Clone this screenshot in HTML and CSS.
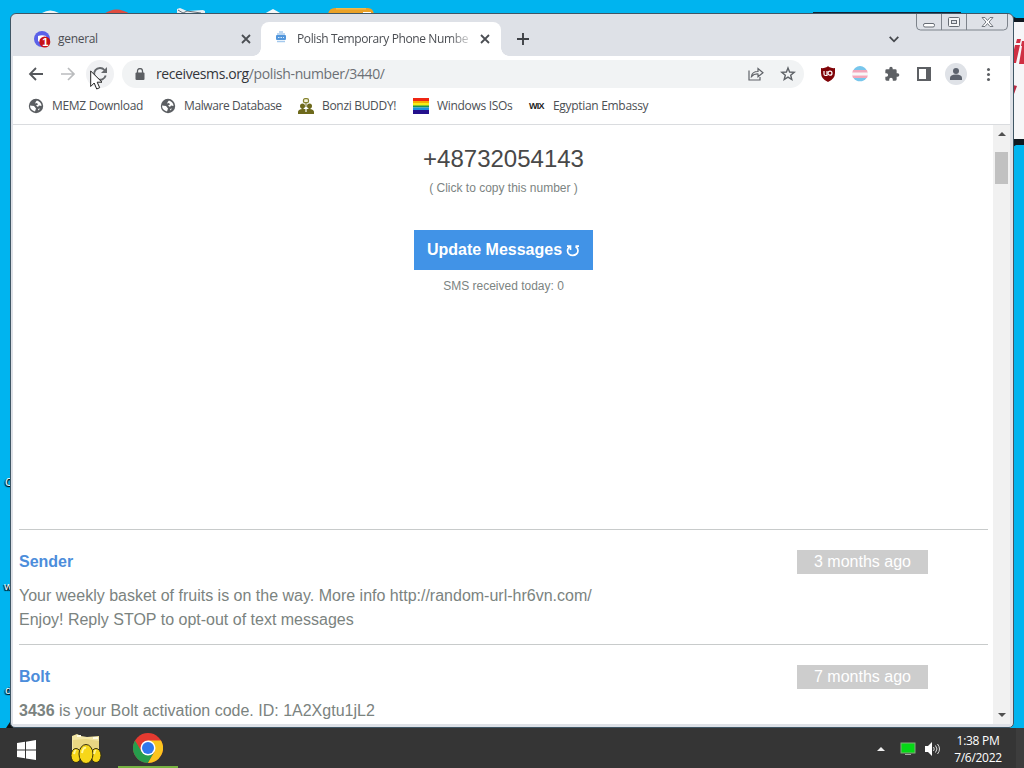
FILE: index.html
```
<!DOCTYPE html>
<html lang="en">
<head>
<meta charset="utf-8">
<title>Polish Temporary Phone Number</title>
<link rel="stylesheet" href="styles.css">
</head>
<body>
<div class="desktop">
  <svg class="wallpaper" width="1024" height="728" viewBox="0 0 1024 728">
    <path d="M42 13q8-5 17 0z" fill="#f3f3f3"/>
    <path d="M104 14q12-9 26 0z" fill="#df4c40"/>
    <path d="M177 14V9l3-1 7 3 16-1 2 1v3z" fill="#e9eef2"/><path d="M178 10l5 3 4-2 14 2" fill="none" stroke="#45505a" stroke-width=".8"/>
    <path d="M264 14l9-5 9 5z" fill="#f7f7f7"/>
    <path d="M328 14q1-6 7-6h33q5 0 6 6z" fill="#eaa126"/><path d="M336 8h30v1.500h-30z" fill="#f2b94a"/><path d="M363 12h8v2h-8z" fill="#fff"/>
    <path d="M813 12.500h148" stroke="#123" stroke-width="1"/>
    <path d="M1008 14l8 4h8v127h-8l-8 5z" fill="#101820"/>
    <path d="M1013 22h11v117h-11z" fill="#f6f6f8"/>
    <path d="M1015 45h5l-4 18h-5zM1017 39h4l-1 4h-4zM1021 46l1-5h2v23h-5l3-18z" fill="#cf3043"/>
    <path d="M1013 85l4 1-3 8h-1z" fill="#b92b43"/>
    <path d="M10 722l-4 6h14z" fill="#111"/>
  </svg>
  <span class="label label-a">C</span><span class="label label-b">w</span><span class="label label-c">d</span>

  <main class="window">
    <header class="tabs">
      <div class="tab idle">
        <svg width="18" height="18" viewBox="0 0 18 18"><circle cx="8" cy="8" r="8" fill="#5b61e8"/><path d="M4 5q4-1.700 8 0l1 5q-2 2-3 0H7q-1 2-3 0z" fill="#fff"/><circle cx="10.800" cy="11" r="5.500" fill="#c81218"/><text x="8.200" y="15" class="badge-text">1</text></svg>
        <span class="tab-title t-general">general</span>
        <svg class="close" width="10" height="10" viewBox="0 0 10 10"><path d="M1 1l8 8M9 1L1 9"/></svg>
      </div>
      <div class="tab active">
        <svg class="sms" width="10" height="12" viewBox="0 0 10 12"><path d="M3 1h4M1 3h8" stroke="#a5c9ed" stroke-width="1.500"/><rect y="4" width="10" height="5" rx="1" fill="#5397dc"/><path d="M2 6.500h6" stroke="#d5e8fa" stroke-dasharray="1.500 1"/><path d="M1 10.500h8" stroke="#a5c9ed" stroke-width="1.500"/></svg>
        <span class="tab-title t-polish">Polish Temporary Phone Numbe</span>
        <svg class="close" width="10" height="10" viewBox="0 0 10 10"><path d="M1 1l8 8M9 1L1 9"/></svg>
      </div>
      <svg class="plus" width="12" height="12" viewBox="0 0 12 12"><path d="M6 0v12M0 6h12" stroke="#3e4146" stroke-width="1.900"/></svg>
      <svg class="chevron" width="10" height="7" viewBox="0 0 10 7"><path d="M.7.8L5 5.300 9.300.8" fill="none" stroke="#45484d" stroke-width="1.800"/></svg>
      <svg class="controls" width="94" height="19" viewBox="0 0 94 19"><path d="M1.500 0v12q0 4 4 4h83q4 0 4-4V0M26.500 0v16M51.500 0v16" fill="none" stroke="#7d838b"/><rect x="8.500" y="9.500" width="11" height="3.500" rx="1.500" fill="#fff" stroke="#666c74"/><rect x="33.500" y="3.500" width="11" height="9" rx="1" fill="#f4f5f6" stroke="#666c74"/><rect x="36.500" y="6.500" width="5" height="3" fill="#dfe2e8" stroke="#666c74"/><path d="M67 3.500h3l2.500 3 2.500-3h3l-4 4.500 4 4.500h-3l-2.500-3-2.500 3h-3l4-4.500z" fill="#fff" stroke="#666c74" stroke-width=".9"/></svg>
    </header>

    <nav class="toolbar">
      <svg class="back" width="16" height="16" viewBox="0 0 16 16"><path d="M15 8H2M8 2L2 8l6 6" fill="none" stroke="#55585c" stroke-width="1.800"/></svg>
      <svg class="forward" width="16" height="16" viewBox="0 0 16 16"><path d="M1 8h13M8 2l6 6-6 6" fill="none" stroke="#babcbe" stroke-width="1.700"/></svg>
      <div class="reload"><svg width="16" height="16" viewBox="0 0 16 16"><path d="M13.700 9.500A5.900 5.900 0 1 1 12.500 4" fill="none" stroke="#66696d" stroke-width="1.900"/><path d="M15 1v6H9z" fill="#66696d"/></svg></div>
      <div class="address">
        <svg width="10" height="13" viewBox="0 0 10 13"><rect x=".5" y="4.500" width="9" height="7.500" rx="1" fill="#5c5f63"/><path d="M2.500 5V3a2.500 2.500 0 0 1 5 0v2" fill="none" stroke="#5c5f63" stroke-width="1.300"/></svg>
        <span class="url">receivesms.org<span>/polish-number/3440/</span></span>
        <svg class="share" width="16" height="14" viewBox="0 0 16 14"><path d="M1 3.500V13h11v-3M3.500 9.500q.5-5 6.500-5V1.500l5 4.300-5 4V7q-4-.3-6.500 2.500z" fill="none" stroke="#606368" stroke-width="1.200"/></svg>
        <svg class="star" width="16" height="16" viewBox="0 0 16 16"><path d="M8 2l1.600 4 4.600.3-3.500 2.900 1.100 4.400L8 11.200l-3.800 2.400 1.100-4.400-3.500-2.900L6.400 6z" fill="none" stroke="#5f6368" stroke-width="1.400"/></svg>
      </div>
      <div class="extensions">
        <svg width="16" height="16" viewBox="0 0 16 16"><path d="M8 0l1 1q3 1.500 6 1v5q0 6-7 9-7-3-7-9V2q3 .5 6-1z" fill="#800408"/><path d="M4 5v3q0 1.500 1.500 1.500H7V5" fill="none" stroke="#fff" stroke-width="1.200"/><circle cx="10" cy="7.200" r="2" fill="none" stroke="#fff" stroke-width="1.200"/></svg>
        <svg width="16" height="16" viewBox="0 0 16 16"><path d="M3 2a8 8 0 0 1 10 0l1.500 2h-13z" fill="#78c6ec"/><path d="M1 4h14l.8 3H.2z" fill="#f3a7bb"/><path d="M0 6.500h16v3H0z" fill="#f9f6f7"/><path d="M.2 9.500h15.600L15 12H1z" fill="#f3a7bb"/><path d="M1.500 12h13a8 8 0 0 1-13 0z" fill="#78c6ec"/></svg>
        <svg width="16" height="16" viewBox="0 0 24 24"><path d="M20.500 11H19V7a2 2 0 0 0-2-2h-4V3.500a2.500 2.500 0 0 0-5 0V5H4a2 2 0 0 0-2 2v3.800h1.500a2.700 2.700 0 0 1 0 5.400H2V20a2 2 0 0 0 2 2h3.800v-1.500a2.700 2.700 0 0 1 5.400 0V22H17a2 2 0 0 0 2-2v-4h1.500a2.500 2.500 0 0 0 0-5z" fill="#5d6064"/></svg>
        <svg width="16" height="16" viewBox="0 0 16 16"><path d="M1 1h14v14H1zM3 3v10h7V3z" fill="#5d6064" fill-rule="evenodd"/></svg>
        <svg class="avatar" width="22" height="22" viewBox="0 0 22 22"><circle cx="11" cy="11" r="11" fill="#dfe2e7"/><circle cx="11" cy="8" r="3" fill="#5d636e"/><path d="M5 17v-2q0-3.500 6-3.500t6 3.500v2z" fill="#5d636e"/></svg>
        <svg width="16" height="16" viewBox="0 0 16 16" fill="#5c5f63"><circle cx="8.500" cy="3.500" r="1.500"/><circle cx="8.500" cy="8.500" r="1.500"/><circle cx="8.500" cy="13.500" r="1.500"/></svg>
      </div>
    </nav>

    <nav class="bookmarks">
      <div class="bookmark b-memz"><svg width="16" height="16" viewBox="0 0 16 16"><circle cx="8" cy="8" r="7.200" fill="#5b5e62"/><path d="M9 2.500q4.500 1.500 4.500 5.500l-2.500-.5-1 1.500-2-1.500 2-1-1-1.500-2 .500 1-2zM2 7.500l4 .5 2 2.500-1 3q-5-1.500-5-6zM10 11l2-.5-1.500 2z" fill="#fff"/></svg><span>MEMZ Download</span></div>
      <div class="bookmark b-malware"><svg width="16" height="16" viewBox="0 0 16 16"><circle cx="8" cy="8" r="7.200" fill="#5b5e62"/><path d="M9 2.500q4.500 1.500 4.500 5.500l-2.500-.5-1 1.500-2-1.500 2-1-1-1.500-2 .500 1-2zM2 7.500l4 .5 2 2.500-1 3q-5-1.500-5-6zM10 11l2-.5-1.500 2z" fill="#fff"/></svg><span>Malware Database</span></div>
      <div class="bookmark b-bonzi"><svg width="16" height="16" viewBox="0 0 16 16"><g fill="#6d691b"><circle cx="4.500" cy="8" r="2.500"/><circle cx="11.500" cy="8" r="2.500"/><path d="M3.500 9h2v3h-2zM10.500 9h2v3h-2zM0 16v-2q0-2 3.500-3h9q3.500 1 3.500 3v2zM7.500 5h1v4h-1z"/></g><path d="M8 11v3" stroke="#fff" stroke-width="1.200"/><rect x="5.500" y=".7" width="5" height="4" rx="1.500" fill="#f5f4db" stroke="#85822f" stroke-width="1.300"/></svg><span>Bonzi BUDDY!</span></div>
      <div class="bookmark b-windows"><svg width="16" height="16" viewBox="0 0 16 16"><path d="M0 0h16v3H0z" fill="#ef2513"/><path d="M0 3h16v3H0z" fill="#f6ae00"/><path d="M0 5h16v3H0z" fill="#f7ef18"/><path d="M0 7.500h16v2H0z" fill="#199451"/><path d="M0 9.500h16v3H0z" fill="#1792e0"/><path d="M0 12h16v4H0z" fill="#24118c"/></svg><span>Windows ISOs</span></div>
      <div class="bookmark b-embassy"><b>WIX</b><span>Egyptian Embassy</span></div>
    </nav>

    <div class="viewport">
      <section class="page">
        <div class="phone">
          <h1>+48732054143</h1>
          <p class="copy">( Click to copy this number )</p>
          <button type="button">Update Messages <svg width="14" height="12" viewBox="0 0 14 12"><path d="M1 1.200h3.500V5M4.200 1.500Q1.500 3 1.500 5.800A5.200 4.500 0 0 0 12 5.800Q12 3 9.500 1.500M13 1.200H9.500" fill="none" stroke="#fff" stroke-width="1.700"/></svg></button>
          <p class="today">SMS received today: 0</p>
        </div>
        <article class="message">
          <div class="heading"><strong>Sender</strong><time>3 months ago</time></div>
          <p>Your weekly basket of fruits is on the way. More info http://random-url-hr6vn.com/<br>Enjoy! Reply STOP to opt-out of text messages</p>
        </article>
        <article class="message">
          <div class="heading"><strong>Bolt</strong><time>7 months ago</time></div>
          <p><b>3436</b> is your Bolt activation code. ID: 1A2Xgtu1jL2</p>
        </article>
      </section>
      <aside class="scrollbar"><svg width="8" height="4" viewBox="0 0 8 4"><path d="M0 4l4-4 4 4z" fill="#505050"/></svg><div class="thumb"></div><svg class="down" width="8" height="4" viewBox="0 0 8 4"><path d="M0 0l4 4 4-4z" fill="#505050"/></svg></aside>
    </div>
  </main>
  <svg class="cursor" width="13" height="20" viewBox="0 0 13 20"><path d="M.7 1v15.500l3.500-3.500 2.500 6 3-1.300-2.500-5.500H12z" fill="#fff" stroke="#222"/></svg>
</div>

<footer class="taskbar">
  <svg class="start" width="19" height="20" viewBox="0 0 19 20"><path d="M0 3l8-1.200v7.700H0zM9 1.700L19 0v9.500H9zM0 10.500h8v7.700L0 17zM9 10.500h10V20L9 18.400z" fill="#fff"/></svg>
  <svg class="folder" width="32" height="32" viewBox="0 0 32 32"><path d="M2 3l5-2 4 2 6 1 12-1v22H2z" fill="#f3e6a4"/><path d="M3 7l13-1 13 2v14H3z" fill="#e9d783"/><path d="M7 3h4M23 5h5" stroke="#fffbe1" stroke-width="2"/><g stroke="#332e0d" fill="#f7d719"><ellipse cx="6" cy="22.500" rx="5" ry="7"/><ellipse cx="26" cy="22.500" rx="5" ry="7"/><ellipse cx="16" cy="21" rx="7" ry="9.500"/></g><path d="M12 20q1-6 4-5M4 21q1-4 2-3M24 21q1-4 2-3" fill="none" stroke="#fff89b" stroke-width="2"/></svg>
  <div class="chrome"><svg width="30" height="30" viewBox="0 0 30 30"><circle cx="15" cy="15" r="15" fill="#e43a30"/><path d="M2 7.500A15 15 0 0 0 15 30l6.500-11.500h-13z" fill="#269d4c"/><path d="M15 30A15 15 0 0 0 28 7.500H15l6.500 11.200z" fill="#fbc51e"/><circle cx="15" cy="15" r="7.500" fill="#fff"/><circle cx="15" cy="15" r="6" fill="#3077ed"/></svg></div>
  <div class="tray">
    <svg width="8" height="4" viewBox="0 0 8 4"><path d="M0 4l4-4 4 4z" fill="#eee"/></svg>
    <svg class="monitor" width="16" height="14" viewBox="0 0 16 14"><rect x="1" y="1" width="14" height="10" fill="#05d816" stroke="#83ad7c"/><path d="M5 12.500h6" stroke="#a2aaa1"/></svg>
    <svg class="speaker" width="16" height="14" viewBox="0 0 16 14"><path d="M0 4h3l4-4v14l-4-4H0z" fill="#fff"/><path d="M8.500 5q1.500 2 0 4M10.500 3.500q3 3.500 0 7M12.500 2q4 5 0 10" fill="none" stroke="#ddd"/></svg>
    <div class="clock"><span>1:38 PM</span><span>7/6/2022</span></div>
  </div>
</footer>
</body>
</html>
```
FILE: styles.css
```
* { box-sizing: border-box; }
body { margin: 0; width: 1024px; height: 768px; overflow: hidden; font-family: "Liberation Sans", Arial, sans-serif; }
svg { display: block; flex: none; }
p, h1 { margin: 0; }
.desktop { position: relative; height: 728px; background: #00b4ef; overflow: hidden; }
.wallpaper { position: absolute; inset: 0; }
.label { position: absolute; left: 5px; color: #fff; font: 11px "Open Sans", sans-serif; text-shadow: 1px 1px 1px #000, -1px 1px 1px #000; }
.label-a { top: 474px; } .label-b { top: 578px; left: 4px; } .label-c { top: 682px; }
.window { position: absolute; left: 10px; top: 13px; width: 1004px; height: 715px; border: 1px solid #3f5665; border-radius: 6px 6px 5px 5px; padding: 0 3px 3px; background: #dee1e7; display: flex; flex-direction: column; overflow: hidden; }
.tabs { height: 42px; flex: none; display: flex; align-items: flex-start; margin-right: -3px; }
.tab { display: flex; align-items: center; height: 34px; margin-top: 8px; }
.idle { width: 247px; padding: 0 10px 0 20px; }
.idle > svg:first-child { margin-top: 2px; }
.active { position: relative; width: 240px; background: #fff; border-radius: 8px 8px 0 0; padding: 0 11px 0 15px; }
.active::before, .active::after { content: ""; position: absolute; bottom: 0; width: 8px; height: 8px; }
.active::before { left: -8px; background: radial-gradient(circle at 0 0, #dee1e7 7.5px, #fff 8px); }
.active::after { right: -8px; background: radial-gradient(circle at 100% 0, #dee1e7 7.5px, #fff 8px); }
.sms { margin-top: -4px; }
.tab-title, .bookmark, .url, .clock { font-family: "Open Sans", sans-serif; white-space: nowrap; }
.tab-title { font-size: 12px; line-height: 18px; color: #4b4e53; }
.t-general { margin-left: 6px; letter-spacing: -.3px; }
.t-polish { width: 173px; margin-left: 11px; letter-spacing: -.39px; mask-image: linear-gradient(to right, #000 88%, rgba(0, 0, 0, .2)); }
.close { margin-left: auto; fill: none; stroke: #4b4e53; stroke-width: 1.8; }
.badge-text { font: bold 11px "Liberation Sans", sans-serif; fill: #fff; }
.plus { margin: 19px 0 0 16px; }
.chevron { margin: 22px 0 0 auto; }
.controls { margin: 0 4px 0 16px; }
.toolbar { height: 36px; flex: none; display: flex; align-items: center; background: #fff; margin: 0 0 0 -1px; padding-left: 15px; }
.forward { margin-left: 16px; }
.reload { width: 28px; height: 28px; margin-left: 10px; border-radius: 50%; background: #f0f1f3; display: grid; place-items: center; }
.address { width: 682px; height: 28px; margin-left: 8px; border-radius: 14px; background: #f1f3f4; display: flex; align-items: center; padding: 0 8px 0 13px; }
.url { margin: -1px 0 0 11px; font-size: 14px; color: #33363b; letter-spacing: -.39px; }
.url span { color: #6c7075; }
.share { margin-left: auto; }
.star { margin-left: 16px; }
.extensions { display: flex; align-items: center; gap: 16px; margin-left: 16px; }
.avatar { margin: 0 -3px; }
.bookmarks { height: 33px; flex: none; display: flex; background: #fff; margin: 0 0 0 -1px; border-bottom: 1px solid #dadcdf; padding: 0 0 4px 15px; }
.bookmark { display: flex; align-items: center; gap: 8px; font-size: 12px; line-height: 18px; color: #4c4f54; letter-spacing: -.31px; }
.b-memz { width: 132px; } .b-malware { width: 138px; letter-spacing: -.4px; } .b-bonzi { width: 115px; } .b-windows { width: 116px; }
.bookmark b { width: 16px; font: bold 9px "Liberation Sans", sans-serif; color: #222; letter-spacing: -.7px; }
.viewport { flex: 1; min-height: 0; display: flex; background: #fff; margin-left: -1px; }
.page { width: 980px; padding: 0 5px 0 6px; overflow: hidden; }
.phone { height: 404px; display: flex; flex-direction: column; align-items: center; padding-top: 18px; }
.phone h1 { font-size: 24px; font-weight: 400; line-height: 32px; color: #484848; }
.phone p { color: #7c8482; font-size: 12px; line-height: 18px; }
.phone .copy { margin-top: 4px; }
.phone button { display: flex; align-items: center; justify-content: center; gap: 4px; width: 179px; height: 40px; margin-top: 33px; border: 0; background: #4193e7; color: #fff; font: bold 16px "Liberation Sans", sans-serif; white-space: nowrap; padding: 0; }
.phone button svg { margin-top: 1px; }
.phone .today { margin-top: 7px; }
.message { border-top: 1px solid #c8cbcb; padding: 20px 0 12px; color: #7b8380; font-size: 16px; line-height: 24px; }
.heading { display: flex; justify-content: space-between; padding-right: 60px; margin-bottom: 10px; }
.heading strong { color: #4c8ddb; }
.heading time { width: 131px; height: 24px; background: #cdcdcd; color: #fff; text-align: center; }
.scrollbar { width: 17px; background: #f1f1f1; display: flex; flex-direction: column; align-items: center; padding: 7px 0; }
.thumb { width: 13px; height: 32px; margin-top: 16px; background: #c1c1c1; }
.down { margin-top: auto; }
.cursor { position: absolute; left: 90px; top: 70px; }
.taskbar { height: 40px; background: #353535; display: flex; }
.start { margin: 12px 0 0 17px; }
.folder { margin: 5px 0 0 34px; }
.chrome { width: 60px; height: 40px; margin-left: 16px; padding: 5px 15px; border-bottom: 2px solid #77b342; }
.tray { margin-left: auto; display: flex; align-items: center; padding-right: 6px; border-right: 8px solid #3d3d3d; color: #fff; }
.tray > svg { margin-top: 2px; }
.tray > .monitor { margin-left: 15px; }
.tray > .speaker { margin-left: 9px; }
.clock { width: 64px; margin-left: 5px; display: flex; flex-direction: column; align-items: center; font-size: 12px; line-height: 17px; padding-top: 1px; letter-spacing: -.3px; }
```
